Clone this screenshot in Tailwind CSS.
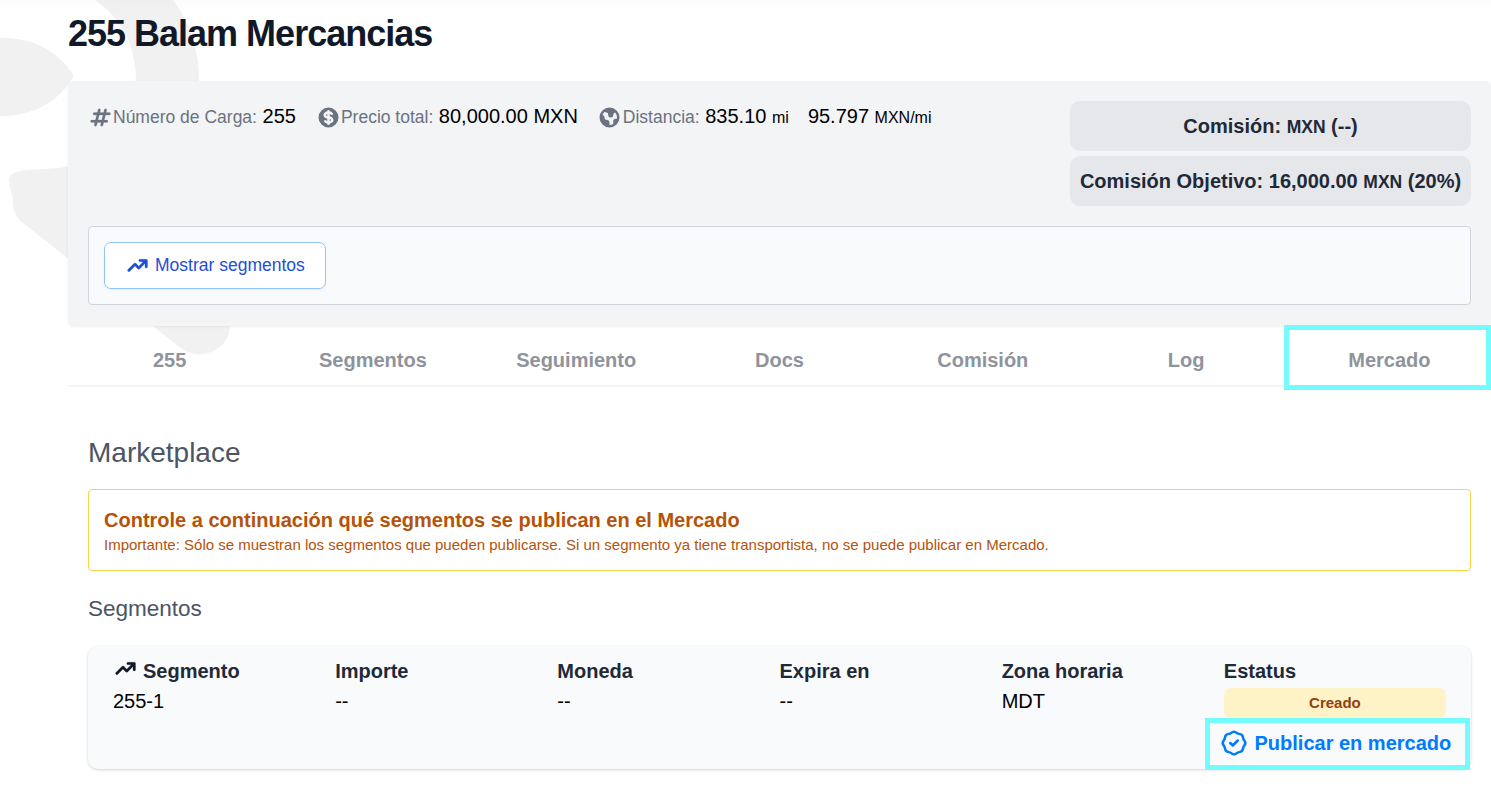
<!DOCTYPE html>
<html lang="es">
<head>
    <meta charset="UTF-8">
    <meta name="viewport" content="width=device-width, initial-scale=1.0">
    <title>255 Balam Mercancias</title>
    <!-- Tailwind CSS CDN -->
    <script src="https://cdn.jsdelivr.net/npm/@tailwindcss/browser@4"></script>
</head>
<body class="bg-white font-['Liberation_Sans',Arial,sans-serif] text-[20px] leading-[30px] text-black">
    <div class="relative h-[792px] overflow-hidden">
        <!-- Background shapes -->
        <svg class="absolute left-0 top-0 -z-10" width="300" height="400" viewBox="0 0 300 400" fill="#f1f1f1">
            <path d="M0 38C34 37 58 52 73 74Q74 77 71 81C52 107 28 116 0 116Z" />
            <path d="M95 0C122 19 137 46 136 85H199C200 50 190 22 173 0Z" />
            <path d="M80 164L68 166C50 172 12 165 9 179C9 187 13 193 13 204C14 213 16 217 22 222L178 346C200 364 230 350 230 325V164Z" />
        </svg>

        <div class="absolute inset-x-0 top-0 -z-10 h-3 bg-linear-to-b from-black/1 to-transparent"></div>

        <div class="pl-[68px]">
            <h1 class="pt-[11px] text-[36px] leading-[45px] font-bold tracking-[-1px] text-[#111827]">255 Balam Mercancias</h1>

            <!-- Load summary -->
            <div class="mt-[25px] h-[245px] rounded-md bg-[#f3f4f6] px-5 pt-5 shadow-[0_1px_3px_rgba(0,0,0,0.06)]">
                <div class="flex h-[125px] justify-between">
                    <div class="flex h-[30px] items-start whitespace-nowrap">
                        <div class="flex">
                            <svg class="mt-[4px] size-[25px] text-[#6b7280]" viewBox="0 0 20 20" fill="currentColor" stroke="currentColor" stroke-width="0.15">
                                <path fill-rule="evenodd" d="M9.243 3.03a1 1 0 01.727 1.213L9.53 6h2.94l.56-2.243a1 1 0 111.94.486L14.53 6H17a1 1 0 110 2h-2.97l-1 4H15a1 1 0 110 2h-2.47l-.56 2.242a1 1 0 11-1.94-.485L10.47 14H7.53l-.56 2.242a1 1 0 11-1.94-.485L5.47 14H3a1 1 0 110-2h2.97l1-4H5a1 1 0 110-2h2.47l.56-2.243a1 1 0 011.213-.727zM9.03 8l-1 4h2.938l1-4H9.031z" clip-rule="evenodd" />
                            </svg>
                            <p><span class="text-[17.5px] text-[#6b7280]">Número de Carga:</span> 255</p>
                        </div>
                        <div class="ml-5 flex">
                            <svg class="mt-[4px] size-[25px] text-[#6b7280]" viewBox="0 0 20 20" fill="currentColor">
                                <path d="M8.433 7.418c.155-.103.346-.196.567-.267v1.698a2.305 2.305 0 01-.567-.267C8.07 8.34 8 8.114 8 8c0-.114.07-.34.433-.582zM11 12.849v-1.698c.22.071.412.164.567.267.364.243.433.468.433.582 0 .114-.07.34-.433.582a2.305 2.305 0 01-.567.267z" />
                                <path fill-rule="evenodd" d="M10 18a8 8 0 100-16 8 8 0 000 16zm1-13a1 1 0 10-2 0v.092a4.535 4.535 0 00-1.676.662C6.602 6.234 6 7.009 6 8c0 .99.602 1.765 1.324 2.246.48.32 1.054.545 1.676.662v1.941c-.391-.127-.68-.317-.843-.504a1 1 0 10-1.51 1.31c.562.649 1.413 1.076 2.353 1.253V15a1 1 0 102 0v-.092a4.535 4.535 0 001.676-.662C13.398 13.766 14 12.991 14 12c0-.99-.602-1.765-1.324-2.246A4.535 4.535 0 0011 9.092V7.151c.391.127.68.317.843.504a1 1 0 101.511-1.31c-.563-.649-1.413-1.076-2.354-1.253V5z" clip-rule="evenodd" />
                            </svg>
                            <p><span class="text-[17.5px] text-[#6b7280]">Precio total:</span> 80,000.00 MXN</p>
                        </div>
                        <div class="ml-[19px] flex">
                            <svg class="mt-[4px] mr-px size-[25px] text-[#6b7280]" viewBox="0 0 20 20" fill="currentColor">
                                <path fill-rule="evenodd" d="M10 18a8 8 0 100-16 8 8 0 000 16zM4.332 8.027a6.012 6.012 0 011.912-2.706C6.512 5.73 6.974 6 7.5 6A1.5 1.5 0 019 7.5V8a2 2 0 004 0 2 2 0 011.523-1.943A5.977 5.977 0 0116 10c0 .34-.028.675-.083 1H15a2 2 0 00-2 2v2.197A5.973 5.973 0 0110 16v-2a2 2 0 00-2-2 2 2 0 01-2-2 2 2 0 00-1.668-1.973z" clip-rule="evenodd" />
                            </svg>
                            <p><span class="text-[17.5px] text-[#6b7280]">Distancia:</span> 835.10 <span class="text-[16px]">mi</span></p>
                        </div>
                        <p class="ml-[19px]">95.797 <span class="text-[16px]">MXN/mi</span></p>
                    </div>
                    <div class="flex w-[401px] flex-col gap-[5px] text-center font-bold whitespace-nowrap text-[#1f2937]">
                        <div class="h-[50px] rounded-[10px] bg-[#e5e7eb] leading-[50px]">Comisión: <span class="text-[17.5px]">MXN</span> (--)</div>
                        <div class="h-[50px] rounded-[10px] bg-[#e5e7eb] leading-[50px]">Comisión Objetivo: 16,000.00 <span class="text-[17.5px]">MXN</span> (20%)</div>
                    </div>
                </div>
                <div class="h-[79px] rounded border border-[#d1d5db] bg-[#f9fafb] p-[15px]">
                    <button class="flex h-[47px] w-[222px] items-center gap-[5px] rounded-[7px] border border-[#93c5fd] bg-white pb-px pl-[22px] text-[17.5px] text-[#1d4ed8] shadow-xs">
                        <svg class="mt-px -ml-[2px] size-[25px]" viewBox="0 0 20 20" fill="currentColor" stroke="currentColor" stroke-width="0.2">
                            <path fill-rule="evenodd" d="M12 7a1 1 0 110-2h5a1 1 0 011 1v5a1 1 0 11-2 0V8.414l-4.293 4.293a1 1 0 01-1.414 0L8 10.414l-4.293 4.293a1 1 0 01-1.414-1.414l5-5a1 1 0 011.414 0L11 10.586 14.586 7H12z" clip-rule="evenodd" />
                        </svg>
                        <span class="-mt-px">Mostrar segmentos</span>
                    </button>
                </div>
            </div>

            <!-- Tabs -->
            <div class="relative grid h-[61px] grid-cols-7 border-b-2 border-[#f3f4f6] text-center leading-[68px] font-bold text-[#8f939b]">
                <div>255</div>
                <div>Segmentos</div>
                <div>Seguimiento</div>
                <div>Docs</div>
                <div>Comisión</div>
                <div>Log</div>
                <div>Mercado</div>
                <div class="absolute -top-px right-0 h-[65px] w-[207px] border-5 border-[#73fbfd]"></div>
            </div>

            <!-- Marketplace -->
            <div class="px-5">
                <h2 class="mt-[46px] text-[28px] leading-[40px] text-[#4b5563]">Marketplace</h2>
                <div class="mt-[16px] h-[82px] rounded border border-[#fcd34d] bg-white px-[15px] pt-[15px] text-[#b45309]">
                    <h3 class="font-bold leading-[30px]">Controle a continuación qué segmentos se publican en el Mercado</h3>
                    <p class="text-[15px] leading-[20px]">Importante: Sólo se muestran los segmentos que pueden publicarse. Si un segmento ya tiene transportista, no se puede publicar en Mercado.</p>
                </div>

                <h2 class="mt-[20px] text-[22.5px] leading-[35px] text-[#4b5563]">Segmentos</h2>
                <div class="relative mt-[20px] h-[123px] rounded-[10px] bg-[#f9fafb] px-[25px] pt-[10px] shadow-[0_1px_3px_rgba(0,0,0,0.18)]">
                    <div class="grid grid-cols-6">
                        <div>
                            <div class="flex items-center gap-[5px] font-bold text-[#1f2937]">
                                <svg class="-mt-[5px] size-[25px] text-[#111827]" viewBox="0 0 20 20" fill="currentColor" stroke="currentColor" stroke-width="0.2">
                                    <path fill-rule="evenodd" d="M12 7a1 1 0 110-2h5a1 1 0 011 1v5a1 1 0 11-2 0V8.414l-4.293 4.293a1 1 0 01-1.414 0L8 10.414l-4.293 4.293a1 1 0 01-1.414-1.414l5-5a1 1 0 011.414 0L11 10.586 14.586 7H12z" clip-rule="evenodd" />
                                </svg>
                                Segmento
                            </div>
                            <div>255-1</div>
                        </div>
                        <div>
                            <div class="font-bold text-[#1f2937]">Importe</div>
                            <div>--</div>
                        </div>
                        <div>
                            <div class="font-bold text-[#1f2937]">Moneda</div>
                            <div>--</div>
                        </div>
                        <div>
                            <div class="font-bold text-[#1f2937]">Expira en</div>
                            <div>--</div>
                        </div>
                        <div>
                            <div class="font-bold text-[#1f2937]">Zona horaria</div>
                            <div>MDT</div>
                        </div>
                        <div>
                            <div class="font-bold text-[#1f2937]">Estatus</div>
                            <div class="mt-[2px] h-[30px] rounded-[7px] bg-[#fef3c7] text-center text-[15px] font-bold text-[#92400e]">Creado</div>
                        </div>
                    </div>
                    <!-- Highlighted publish action -->
                    <div class="absolute top-[72px] right-[1px] flex h-[52px] w-[265px] items-center gap-[5.5px] border-5 border-[#73fbfd] pb-[2px] pl-[9px] font-bold whitespace-nowrap text-[#007bff]">
                        <svg class="size-[30px]" viewBox="0 0 24 24" fill="none" stroke="currentColor" stroke-width="2" stroke-linecap="round" stroke-linejoin="round">
                            <path d="M9 12l2 2 4-4M7.835 4.697a3.42 3.42 0 001.946-.806 3.42 3.42 0 014.438 0 3.42 3.42 0 001.946.806 3.42 3.42 0 013.138 3.138 3.42 3.42 0 00.806 1.946 3.42 3.42 0 010 4.438 3.42 3.42 0 00-.806 1.946 3.42 3.42 0 01-3.138 3.138 3.42 3.42 0 00-1.946.806 3.42 3.42 0 01-4.438 0 3.42 3.42 0 00-1.946-.806 3.42 3.42 0 01-3.138-3.138 3.42 3.42 0 00-.806-1.946 3.42 3.42 0 010-4.438 3.42 3.42 0 00.806-1.946 3.42 3.42 0 013.138-3.138z" />
                        </svg>
                        Publicar en mercado
                    </div>
                </div>
            </div>
        </div>
    </div>
</body>
</html>
